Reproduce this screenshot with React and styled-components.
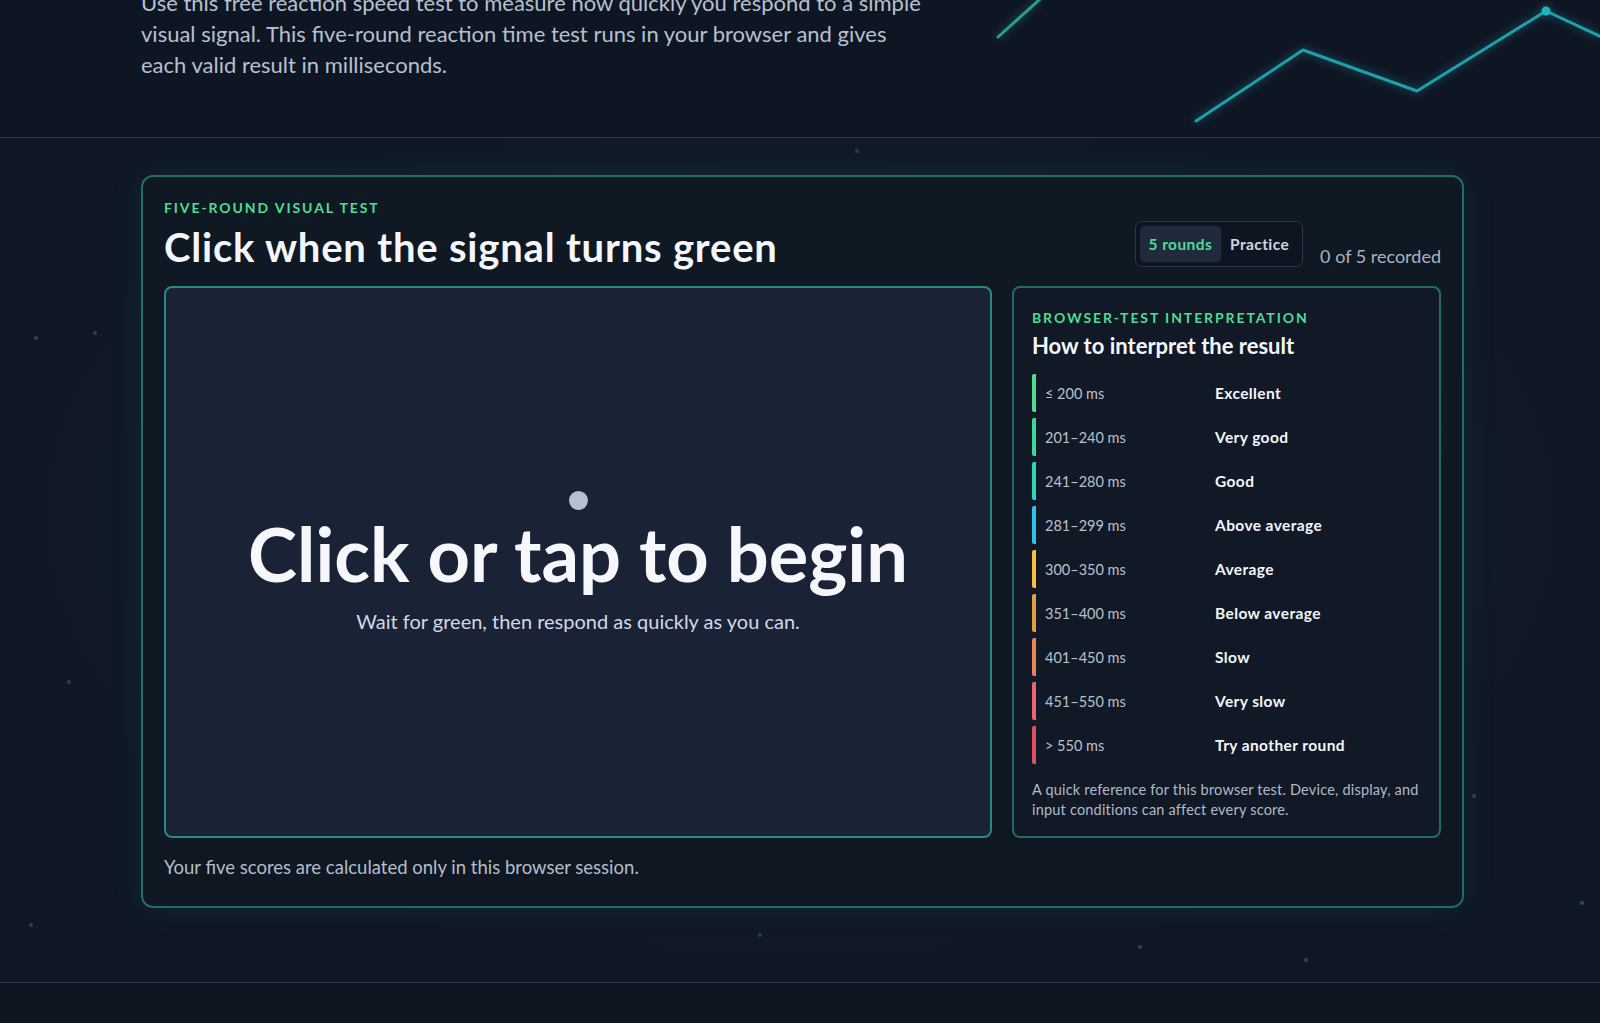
import React from 'react';
import styled, { createGlobalStyle } from 'styled-components';

const GlobalStyle = createGlobalStyle`
  html, body {
    margin: 0;
    padding: 0;
    background: #0f1623;
  }
  body {
    font-family: "Segoe UI", Lato, "Noto Sans", sans-serif;
    color: #e8edf5;
    -webkit-font-smoothing: antialiased;
  }
  * {
    box-sizing: border-box;
  }
`;

const SCALE = [
  { range: '≤ 200 ms', label: 'Excellent', color: '#4fdc8f' },
  { range: '201–240 ms', label: 'Very good', color: '#3fd69a' },
  { range: '241–280 ms', label: 'Good', color: '#2fd4bd' },
  { range: '281–299 ms', label: 'Above average', color: '#2cc3ef' },
  { range: '300–350 ms', label: 'Average', color: '#f6c142' },
  { range: '351–400 ms', label: 'Below average', color: '#dda044' },
  { range: '401–450 ms', label: 'Slow', color: '#ee8455' },
  { range: '451–550 ms', label: 'Very slow', color: '#f06470' },
  { range: '> 550 ms', label: 'Try another round', color: '#e0505e' },
];

const Page = styled.div`
  min-height: 100vh;
  background: #0e1420;
`;

const Hero = styled.header`
  position: relative;
  overflow: hidden;
  background: #0f1623;
  border-bottom: 1px solid #2a3348;
  padding-bottom: 57px;
`;

const Container = styled.div`
  width: 1322px;
  margin: 0 0 0 141px;
`;

const Intro = styled.p`
  margin: -13px 0 0;
  max-width: 790px;
  font-size: 22px;
  line-height: 31px;
  color: #b6c0cf;
`;

const Chart = styled.svg`
  position: absolute;
  top: 0;
  right: 0;
  width: 650px;
  height: 137px;
  filter: drop-shadow(0 0 4px rgba(34, 200, 220, 0.45));
`;

const Section = styled.section`
  padding: 37px 0 74px;
  background-color: #101825;
  background-image:
    radial-gradient(circle at 36px 200px, rgba(90, 150, 160, 0.35) 1.5px, transparent 2.5px),
    radial-gradient(circle at 95px 195px, rgba(90, 150, 160, 0.3) 1.5px, transparent 2.5px),
    radial-gradient(circle at 69px 544px, rgba(90, 150, 160, 0.3) 1.5px, transparent 2.5px),
    radial-gradient(circle at 31px 787px, rgba(90, 150, 160, 0.3) 1.5px, transparent 2.5px),
    radial-gradient(circle at 760px 797px, rgba(90, 150, 160, 0.3) 1.5px, transparent 2.5px),
    radial-gradient(circle at 1140px 809px, rgba(90, 150, 160, 0.35) 1.5px, transparent 2.5px),
    radial-gradient(circle at 1306px 822px, rgba(90, 150, 160, 0.35) 1.5px, transparent 2.5px),
    radial-gradient(circle at 1474px 658px, rgba(90, 150, 160, 0.35) 1.5px, transparent 2.5px),
    radial-gradient(circle at 1582px 765px, rgba(90, 150, 160, 0.4) 1.5px, transparent 2.5px),
    radial-gradient(circle at 857px 13px, rgba(90, 150, 160, 0.3) 1.5px, transparent 2.5px),
    radial-gradient(ellipse at 50% 45%, rgba(30, 60, 70, 0.25), transparent 70%);
`;

const Panel = styled.div`
  width: 1323px;
  margin: 0 0 0 141px;
  padding: 22px 21px 27px;
  border: 2px solid #1f6d66;
  border-radius: 12px;
  background: linear-gradient(180deg, #0f1923 0%, #0f1822 100%);
  box-shadow: 0 0 36px rgba(40, 190, 170, 0.08);
`;

const Header = styled.div`
  display: flex;
  justify-content: space-between;
  align-items: flex-end;
`;

const Eyebrow = styled.div`
  font-size: 14px;
  line-height: 17px;
  font-weight: 700;
  letter-spacing: 1.9px;
  text-transform: uppercase;
  color: #50dc94;
`;

const Title = styled.h2`
  margin: 8px 0 0;
  font-size: 40px;
  line-height: 46px;
  font-weight: 700;
  letter-spacing: 0.8px;
  color: #f3f6fb;
`;

const Controls = styled.div`
  display: flex;
  align-items: flex-end;
  gap: 17px;
  margin-bottom: 3px;
`;

const Segmented = styled.div`
  display: flex;
  padding: 4px;
  border: 1px solid #2c3648;
  border-radius: 7px;
  background: #0f1520;
`;

const SegButton = styled.button`
  height: 36px;
  padding: 0 9px;
  border: 0;
  border-radius: 5px;
  background: ${(p) => (p.active ? '#1f2a3c' : 'transparent')};
  color: ${(p) => (p.active ? '#50dc94' : '#cfd6e1')};
  font-family: inherit;
  font-size: 15.5px;
  font-weight: 700;
  letter-spacing: 0.4px;
  cursor: pointer;
`;

const Recorded = styled.span`
  font-size: 18px;
  line-height: 22px;
  color: #a9b3c2;
`;

const Grid = styled.div`
  display: grid;
  grid-template-columns: minmax(0, 1fr) 429px;
  gap: 20px;
  margin-top: 16px;
`;

const Stage = styled.div`
  min-height: 550px;
  display: flex;
  flex-direction: column;
  align-items: center;
  justify-content: center;
  border: 2px solid #2a8a80;
  border-radius: 8px;
  background: #1a2236;
  cursor: pointer;
`;

const Dot = styled.span`
  width: 19px;
  height: 19px;
  border-radius: 50%;
  background: #b6c0d0;
  margin-bottom: 4px;
`;

const BigText = styled.div`
  font-size: 74px;
  line-height: 80px;
  font-weight: 700;
  color: #f5f7fb;
`;

const Sub = styled.div`
  margin-top: 14px;
  font-size: 20px;
  line-height: 26px;
  color: #d2d9e4;
`;

const Card = styled.aside`
  padding: 21px 18px 16px;
  border: 2px solid #1f6d66;
  border-radius: 8px;
  background: #111826;
`;

const CardTitle = styled.h3`
  margin: 6px 0 14px;
  font-size: 22px;
  line-height: 28px;
  font-weight: 700;
  color: #f3f6fb;
`;

const ScaleList = styled.ul`
  list-style: none;
  margin: 0;
  padding: 0;
  display: flex;
  flex-direction: column;
  gap: 6px;
`;

const Row = styled.li`
  display: grid;
  grid-template-columns: 170px 1fr;
  align-items: center;
  height: 38px;
  padding-left: 9px;
  border-left: 4px solid ${(p) => p.color};
  border-radius: 2px;
`;

const Range = styled.span`
  font-size: 14.5px;
  color: #b8c1ce;
`;

const Label = styled.span`
  font-size: 15.5px;
  font-weight: 700;
  letter-spacing: 0.4px;
  color: #f3f6fb;
`;

const Footnote = styled.p`
  margin: 16px 0 0;
  font-size: 14.5px;
  line-height: 20px;
  letter-spacing: 0.2px;
  color: #b0bac8;
`;

const Note = styled.p`
  margin: 17px 0 0;
  font-size: 18.5px;
  line-height: 24px;
  color: #b4bdca;
`;

const Footer = styled.footer`
  height: 42px;
  border-top: 1px solid #2a3450;
  background: #0e1420;
`;

function App() {
  return (
    <Page>
      <GlobalStyle />
      <Hero>
        <Container>
          <Intro>
            Use this free reaction speed test to measure how quickly you respond to a simple
            visual signal. This five-round reaction time test runs in your browser and gives
            each valid result in milliseconds.
          </Intro>
        </Container>
        <Chart viewBox="950 0 650 137" fill="none">
          <polyline points="998,37 1048,-8" stroke="#2a9f86" strokeWidth="3" strokeLinecap="round" />
          <polyline
            points="1196,121 1303,50 1417,91 1546,11 1640,55"
            stroke="#1e9fa9"
            strokeWidth="3"
            strokeLinejoin="round"
            strokeLinecap="round"
          />
          <circle cx="1546" cy="11" r="4.5" fill="#22b3c0" />
        </Chart>
      </Hero>

      <Section>
        <Panel>
          <Header>
            <div>
              <Eyebrow>Five-round visual test</Eyebrow>
              <Title>Click when the signal turns green</Title>
            </div>
            <Controls>
              <Segmented>
                <SegButton active>5 rounds</SegButton>
                <SegButton>Practice</SegButton>
              </Segmented>
              <Recorded>0 of 5 recorded</Recorded>
            </Controls>
          </Header>

          <Grid>
            <Stage>
              <Dot />
              <BigText>Click or tap to begin</BigText>
              <Sub>Wait for green, then respond as quickly as you can.</Sub>
            </Stage>

            <Card>
              <Eyebrow>Browser-test interpretation</Eyebrow>
              <CardTitle>How to interpret the result</CardTitle>
              <ScaleList>
                {SCALE.map((item) => (
                  <Row key={item.range} color={item.color}>
                    <Range>{item.range}</Range>
                    <Label>{item.label}</Label>
                  </Row>
                ))}
              </ScaleList>
              <Footnote>
                A quick reference for this browser test. Device, display, and input conditions
                can affect every score.
              </Footnote>
            </Card>
          </Grid>

          <Note>Your five scores are calculated only in this browser session.</Note>
        </Panel>
      </Section>

      <Footer />
    </Page>
  );
}

export default App;
